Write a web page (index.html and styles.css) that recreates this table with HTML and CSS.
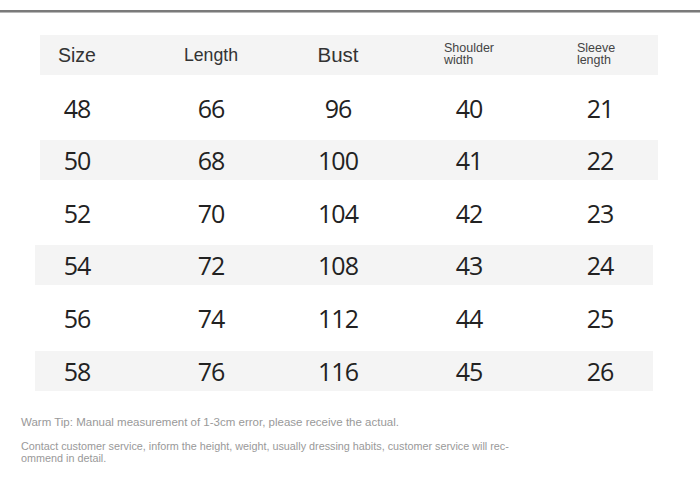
FILE: index.html
```html
<!DOCTYPE html>
<html lang="en">
<head>
<meta charset="utf-8">
<title>Size chart</title>
<link rel="stylesheet" href="styles.css">
</head>
<body>
<div class="rule"></div>
<div class="chart">
  <div class="row shaded head">
    <span class="h-size">Size</span>
    <span class="h-length">Length</span>
    <span class="h-bust">Bust</span>
    <span class="h-small">Shoulder<br>width</span>
    <span class="h-small h-last">Sleeve<br>length</span>
  </div>
  <div class="row"><span>48</span><span>66</span><span>96</span><span>40</span><span>21</span></div>
  <div class="row shaded"><span>50</span><span>68</span><span>100</span><span>41</span><span>22</span></div>
  <div class="row"><span>52</span><span>70</span><span>104</span><span>42</span><span>23</span></div>
  <div class="row shaded offset"><span>54</span><span>72</span><span>108</span><span>43</span><span>24</span></div>
  <div class="row offset"><span>56</span><span>74</span><span>112</span><span>44</span><span>25</span></div>
  <div class="row shaded offset"><span>58</span><span>76</span><span>116</span><span>45</span><span>26</span></div>
</div>
<div class="notes">
  <p class="tip">Warm Tip: Manual measurement of 1-3cm error, please receive the actual.</p>
  <p class="tip tip-small">Contact customer service, inform the height, weight, usually dressing habits, customer service will rec-<br>ommend in detail.</p>
</div>
</body>
</html>
```

FILE: styles.css
```css
html, body {
  margin: 0;
  padding: 0;
  background: #ffffff;
}

body {
  width: 700px;
  height: 482px;
  overflow: hidden;
  font-family: "Liberation Sans", Arial, sans-serif;
}

.rule {
  margin-top: 10px;
  height: 2px;
  background: #7a7a7a;
  border-bottom: 1px solid #b8b8b8;
}

.chart {
  margin-top: 22px;
  display: flex;
  flex-direction: column;
  gap: 12.6px;
}

.row {
  box-sizing: border-box;
  width: 618px;
  height: 40px;
  margin-left: 40px;
  display: grid;
  grid-template-columns: 74px 194px 60px 202px 60px;
  align-items: center;
  justify-items: center;
  font-family: "Open Sans", "Noto Sans", sans-serif;
  font-size: 25px;
  letter-spacing: -1px;
  line-height: 40px;
  color: #222222;
}

.row.offset {
  margin-left: 35px;
  padding-left: 5px;
}

.row.shaded {
  background: #f4f4f4;
}

.head {
  font-family: "Liberation Sans", Arial, sans-serif;
  letter-spacing: 0;
  color: #333333;
}

.h-size {
  font-size: 19.5px;
}

.h-length {
  font-size: 17.7px;
}

.h-bust {
  font-size: 20.5px;
}

.h-small {
  font-size: 12.5px;
  line-height: 12.5px;
  text-align: left;
  color: #444444;
  padding-bottom: 2px;
}

.h-last {
  margin-right: 8px;
}

.notes {
  margin-top: 25px;
  margin-left: 21px;
  font-family: "Liberation Sans", Arial, sans-serif;
  font-size: 11.5px;
  line-height: 12px;
  color: #999999;
}

.tip {
  margin: 0 0 12px 0;
}

.tip-small {
  font-size: 10.8px;
}
```
